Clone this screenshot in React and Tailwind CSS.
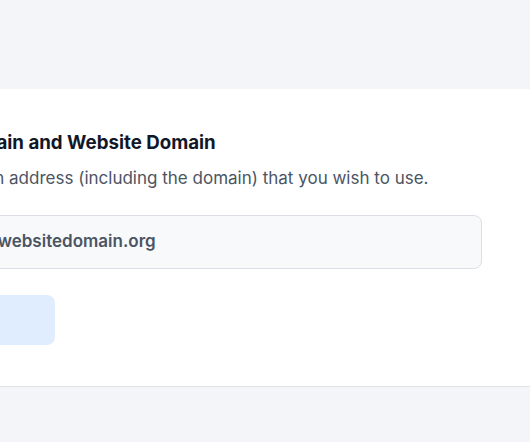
export default function App() {
  return (
    <div className="h-[442px] w-[530px] overflow-hidden bg-[#f3f5f9] pt-[89px]" style={{ fontFamily: 'Inter, "Noto Sans", sans-serif' }}>
      <div className="-ml-[154px] w-[800px] border-b border-[#e1e4e9] bg-white pl-[32px] pt-[40px] pb-[41px]">
        <h2 className="text-[18.7px] leading-[28px] font-bold text-[#111827]">Primary Domain and Website Domain</h2>
        <p className="mt-[7px] text-[17px] leading-[28px] text-[#4b5563]">Enter your login address (including the domain) that you wish to use.</p>
        <div className="mt-[23px] flex h-[54px] w-[604px] items-center rounded-lg border border-[#dcdfe5] bg-[#f8f9fb] pl-[10px] pr-4 text-[17px] font-semibold text-[#4b5563]">
          webmaster@websitedomain.org
        </div>
        <div className="mt-[26px] h-[50px] w-[177px] rounded-lg bg-[#e0edfe]" />
      </div>
    </div>
  )
}
